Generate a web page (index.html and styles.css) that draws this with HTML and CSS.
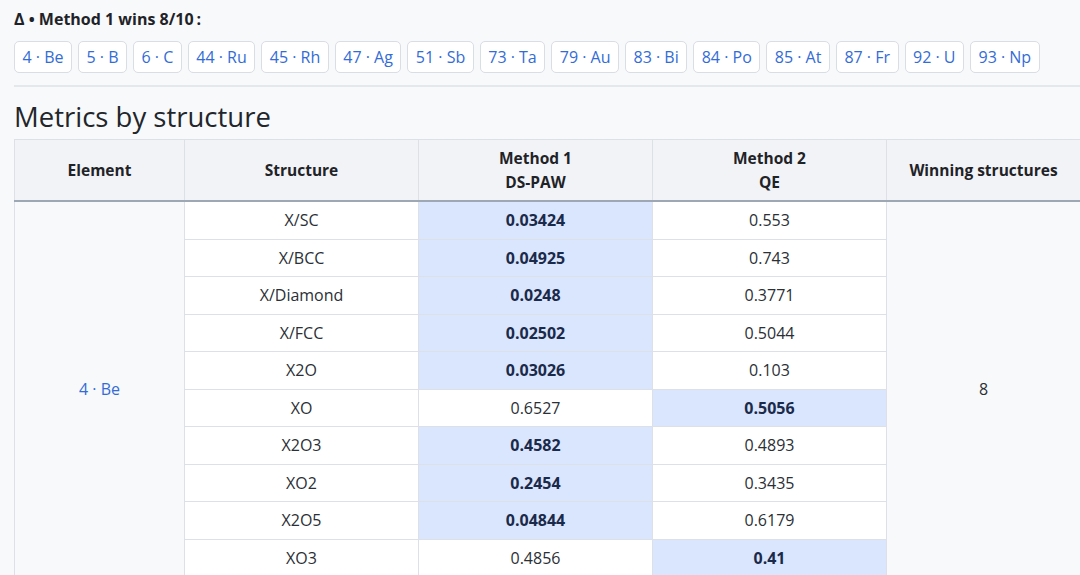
FILE: index.html
```html
<!DOCTYPE html>
<html lang="en">
<head>
<meta charset="utf-8">
<title>Metrics by structure</title>
<link rel="stylesheet" href="styles.css">
</head>
<body>
<div class="page">
  <p class="summary">Δ • Method 1 wins 8/10<span class="colon">:</span></p>
  <div class="chips">
    <a class="chip">4 · Be</a>
    <a class="chip">5 · B</a>
    <a class="chip">6 · C</a>
    <a class="chip">44 · Ru</a>
    <a class="chip">45 · Rh</a>
    <a class="chip">47 · Ag</a>
    <a class="chip">51 · Sb</a>
    <a class="chip">73 · Ta</a>
    <a class="chip">79 · Au</a>
    <a class="chip">83 · Bi</a>
    <a class="chip">84 · Po</a>
    <a class="chip">85 · At</a>
    <a class="chip">87 · Fr</a>
    <a class="chip">92 · U</a>
    <a class="chip">93 · Np</a>
  </div>
  <div class="rule"></div>
  <h2 class="heading">Metrics by structure</h2>
  <table class="metrics">
    <colgroup>
      <col class="c-el"><col class="c-st"><col class="c-m1"><col class="c-m2"><col class="c-win">
    </colgroup>
    <thead>
      <tr>
        <th>Element</th>
        <th>Structure</th>
        <th>Method 1<br>DS-PAW</th>
        <th>Method 2<br>QE</th>
        <th>Winning structures</th>
      </tr>
    </thead>
    <tbody>
      <tr>
        <td class="group" rowspan="10"><a class="link">4 · Be</a></td>
        <td>X/SC</td><td class="win">0.03424</td><td>0.553</td>
        <td class="group" rowspan="10">8</td>
      </tr>
      <tr><td>X/BCC</td><td class="win">0.04925</td><td>0.743</td></tr>
      <tr><td>X/Diamond</td><td class="win">0.0248</td><td>0.3771</td></tr>
      <tr><td>X/FCC</td><td class="win">0.02502</td><td>0.5044</td></tr>
      <tr><td>X2O</td><td class="win">0.03026</td><td>0.103</td></tr>
      <tr><td>XO</td><td>0.6527</td><td class="win">0.5056</td></tr>
      <tr><td>X2O3</td><td class="win">0.4582</td><td>0.4893</td></tr>
      <tr><td>XO2</td><td class="win">0.2454</td><td>0.3435</td></tr>
      <tr><td>X2O5</td><td class="win">0.04844</td><td>0.6179</td></tr>
      <tr><td>XO3</td><td>0.4856</td><td class="win">0.41</td></tr>
    </tbody>
  </table>
</div>
</body>
</html>
```
FILE: styles.css
```css
html, body {
  margin: 0;
  padding: 0;
  background: #f8f9fb;
}
body {
  font-family: "Open Sans", "Noto Sans", sans-serif;
  color: #2b2f36;
  font-size: 16px;
  overflow: hidden;
}
.page {
  padding: 8px 0 0 14px;
  width: 1066px;
}
.summary {
  margin: 0;
  font-weight: 700;
  font-size: 16px;
  line-height: 22px;
  color: #1f2328;
}
.colon {
  margin-left: 3px;
}
.chips {
  display: flex;
  gap: 6px;
  margin-top: 11px;
}
.chip {
  display: block;
  background: #fff;
  border: 1px solid #d9dde4;
  border-radius: 5px;
  padding: 4px 7.5px;
  line-height: 22px;
  font-size: 16px;
  color: #336cd6;
  white-space: nowrap;
}
.rule {
  margin-top: 12px;
  height: 2px;
  background: #e4e7eb;
}
.heading {
  margin: 13px 0 0 0;
  font-size: 27.5px;
  font-weight: 400;
  line-height: 34px;
  color: #22262b;
}
.metrics {
  margin-top: 5px;
  width: 1066px;
  border-collapse: collapse;
  table-layout: fixed;
  border: 1px solid #dde1e7;
}
.c-el { width: 170px; }
.c-st { width: 234px; }
.c-m1 { width: 234px; }
.c-m2 { width: 234px; }
.c-win { width: 194px; }
.metrics th {
  background: #f2f3f6;
  font-weight: 700;
  font-size: 15.5px;
  line-height: 24px;
  padding: 6px 8px;
  border: 1px solid #dde1e7;
  border-bottom: 2px solid #9ea7b4;
  color: #1f2328;
  text-align: center;
}
.metrics td {
  background: #fff;
  text-align: center;
  padding: 7px 8px;
  line-height: 22.5px;
  font-size: 16px;
  border: 1px solid #dde1e7;
  color: #2b2f36;
}
.metrics td.group {
  background: #f8f9fb;
}
.metrics td.win {
  background: #dae6fd;
  font-weight: 700;
  color: #1a2a4a;
}
.link {
  color: #336cd6;
}
```
